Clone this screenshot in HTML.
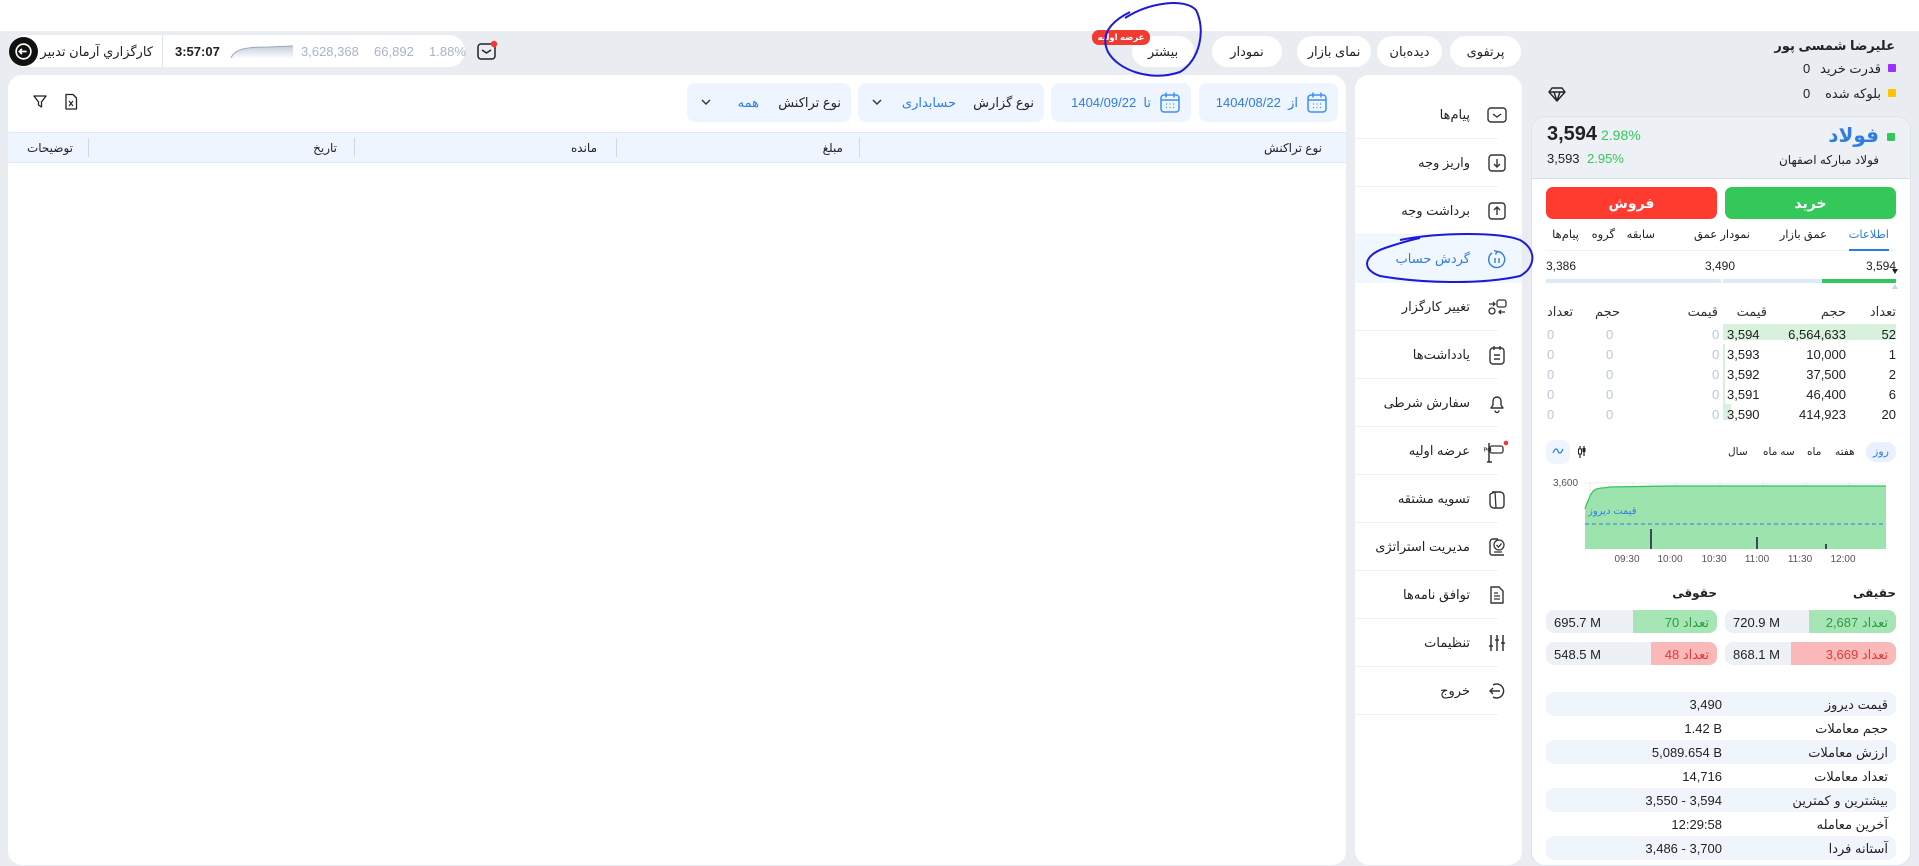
<!DOCTYPE html>
<html><head><meta charset="utf-8">
<style>
*{box-sizing:border-box;margin:0;padding:0}
body{width:1919px;height:852px;overflow:hidden;background:#e9ecf1;font-family:"Liberation Sans","DejaVu Sans",sans-serif;color:#222;position:relative;font-size:13px}
.a{position:absolute}
.r{direction:rtl;white-space:nowrap}
.pill{position:absolute;top:36px;height:31px;background:#fff;border-radius:16px;font-size:13px;display:flex;align-items:center;justify-content:center;direction:rtl}
.box{position:absolute;top:83px;height:39px;background:#eef5ff;border-radius:8px;direction:rtl;font-size:13px}
.mi{position:absolute;left:1355px;width:167px;height:48px;direction:rtl;font-size:13px}
.mi span{position:absolute;right:52px;top:16px}
.mi svg{position:absolute;right:14px;top:13px}
.mi .sep{position:absolute;left:0;right:24px;bottom:0;height:1px;background:#eef1f5}
.ob{position:absolute;font-size:13px;color:#333}
.g0{color:#b8c8db}
.st{position:absolute;left:1546px;width:350px;height:24px;font-size:13px}
.st.b{background:#f0f5fc;border-radius:8px}
.st .l{position:absolute;right:8px;top:5px;direction:rtl}
.st .v{position:absolute;right:174px;top:5px}
.tb{position:absolute;top:227px;font-size:11.5px;direction:rtl;white-space:nowrap}
</style></head><body>
<div class="a" style="left:0;top:0;width:1919px;height:31px;background:#fff"></div>

<!-- header left pill -->
<div class="a" style="left:9px;top:35px;width:456px;height:32px;background:#fff;border-radius:16px"></div>
<div class="a" style="left:9px;top:37px;width:29px;height:29px;border-radius:15px;background:#111"></div>
<svg class="a" style="left:13px;top:41px" width="21" height="21" viewBox="0 0 20 20"><circle cx="10" cy="10" r="7" fill="none" stroke="#fff" stroke-width="1.6"/><path d="M13 10H6M8.5 7.5 6 10l2.5 2.5" fill="none" stroke="#fff" stroke-width="1.6"/></svg>
<div class="a r" style="right:1766px;top:44px;font-size:13px">کارگزاري آرمان تدبير</div>
<div class="a" style="left:162px;top:35px;width:1px;height:32px;background:#dde6f0"></div>
<div class="a" style="left:175px;top:44px;font-size:13px;font-weight:bold">3:57:07</div>
<svg class="a" style="left:229px;top:43px" width="64" height="16"><defs><linearGradient id="sg" x1="0" x2="0" y1="0" y2="1"><stop offset="0" stop-color="#c6d0dc"/><stop offset="1" stop-color="#fff"/></linearGradient></defs><path d="M2 15C6 5 20 4 40 4L64 3V16H2Z" fill="url(#sg)"/><path d="M2 15C6 5 20 4 40 4L64 3" fill="none" stroke="#9aa8ba"/></svg>
<div class="a" style="left:301px;top:44px;font-size:13px;color:#a9b5c5;word-spacing:4px">3,628,368&nbsp; 66,892&nbsp; 1.88%</div>
<svg class="a" style="left:476px;top:40px" width="22" height="22" viewBox="0 0 22 22"><rect x="2" y="4" width="17" height="15" rx="3" fill="none" stroke="#222" stroke-width="1.5"/><path d="M6 10l4.5 3 4.5-3" fill="none" stroke="#222" stroke-width="1.5"/><circle cx="18" cy="4" r="3.2" fill="#f33"/></svg>

<!-- tabs -->
<div class="pill" style="left:1132px;width:62px">بیشتر</div>
<div class="a r" style="left:1092px;top:30px;width:58px;height:15px;background:#f23b30;color:#fff;border-radius:7px;font-size:8.5px;font-weight:bold;text-align:center;line-height:15px">عرضه اولیه</div>
<div class="pill" style="left:1212px;width:70px">نمودار</div>
<div class="pill" style="left:1297px;width:74px">نمای بازار</div>
<div class="pill" style="left:1377px;width:65px">دیده‌بان</div>
<div class="pill" style="left:1450px;width:71px">پرتفوی</div>

<!-- user -->
<div class="a r" style="right:24px;top:38px;font-size:13px;font-weight:bold">علیرضا شمسی پور</div>
<div class="a" style="left:1888px;top:64px;width:8px;height:8px;background:#9b30ff;border-radius:1px"></div>
<div class="a r" style="right:38px;top:61px">قدرت خرید</div>
<div class="a" style="left:1803px;top:61px">0</div>
<div class="a" style="left:1888px;top:89px;width:8px;height:8px;background:#ffc400;border-radius:1px"></div>
<div class="a r" style="right:38px;top:86px">بلوکه شده</div>
<div class="a" style="left:1803px;top:86px">0</div>
<svg class="a" style="left:1548px;top:86px" width="18" height="17" viewBox="0 0 18 17"><path d="M4 2h10l3 4-8 9-8-9z M1 6h16 M6 6l3 9 3-9" fill="none" stroke="#222" stroke-width="1.4" stroke-linejoin="round"/></svg>

<!-- main panel -->
<div class="a" style="left:8px;top:75px;width:1338px;height:790px;background:#fff;border-radius:14px"></div>
<div class="box" style="left:1199px;width:139px"><svg class="a" style="right:10px;top:8px" width="22" height="23" viewBox="0 0 22 23"><rect x="2" y="4" width="18" height="17" rx="3" fill="none" stroke="#3d8df5" stroke-width="1.5"/><path d="M2 9h18M7 1.5v5M15 1.5v5" stroke="#3d8df5" stroke-width="1.5"/><path d="M7 13h1M10.5 13h1M14 13h1M7 16.5h1M10.5 16.5h1M14 16.5h1" stroke="#3d8df5" stroke-width="1.3"/></svg><span class="a" style="right:40px;top:12px;color:#2f7de1">از&nbsp; 1404/08/22</span></div>
<div class="box" style="left:1051px;width:140px"><svg class="a" style="right:10px;top:8px" width="22" height="23" viewBox="0 0 22 23"><rect x="2" y="4" width="18" height="17" rx="3" fill="none" stroke="#3d8df5" stroke-width="1.5"/><path d="M2 9h18M7 1.5v5M15 1.5v5" stroke="#3d8df5" stroke-width="1.5"/><path d="M7 13h1M10.5 13h1M14 13h1M7 16.5h1M10.5 16.5h1M14 16.5h1" stroke="#3d8df5" stroke-width="1.3"/></svg><span class="a" style="right:40px;top:12px;color:#2f7de1">تا&nbsp; 1404/09/22</span></div>
<div class="box" style="left:858px;width:186px"><span class="a" style="right:10px;top:12px">نوع گزارش</span><span class="a" style="right:88px;top:12px;color:#2f7de1">حسابداری</span><svg class="a" style="left:14px;top:16px" width="10" height="7"><path d="M1 1l4 4 4-4" fill="none" stroke="#333" stroke-width="1.4"/></svg></div>
<div class="box" style="left:687px;width:164px"><span class="a" style="right:10px;top:12px">نوع تراکنش</span><span class="a" style="right:92px;top:12px;color:#2f7de1">همه</span><svg class="a" style="left:14px;top:16px" width="10" height="7"><path d="M1 1l4 4 4-4" fill="none" stroke="#333" stroke-width="1.4"/></svg></div>
<svg class="a" style="left:32px;top:94px" width="16" height="16" viewBox="0 0 16 16"><path d="M2 2h12l-4.5 6v5l-3-2V8z" fill="none" stroke="#222" stroke-width="1.3" stroke-linejoin="round"/></svg>
<svg class="a" style="left:64px;top:93px" width="14" height="18" viewBox="0 0 14 18"><path d="M2 1.5h7l3.5 3.5v11H2z" fill="none" stroke="#222" stroke-width="1.3" stroke-linejoin="round"/><path d="M5 8l4 5M9 8l-4 5" stroke="#222" stroke-width="1.2"/></svg>
<div class="a" style="left:8px;top:132px;width:1338px;height:31px;background:#eef5ff;border-top:1px solid #dfeaf8;border-bottom:1px solid #dfeaf8"></div>
<div class="a" style="left:88px;top:138px;width:1px;height:19px;background:#cfd9e6"></div>
<div class="a" style="left:354px;top:138px;width:1px;height:19px;background:#cfd9e6"></div>
<div class="a" style="left:616px;top:138px;width:1px;height:19px;background:#cfd9e6"></div>
<div class="a" style="left:859px;top:138px;width:1px;height:19px;background:#cfd9e6"></div>
<div class="a r" style="right:597px;top:141px;font-size:12px">نوع تراکنش</div>
<div class="a r" style="right:1076px;top:141px;font-size:12px">مبلغ</div>
<div class="a r" style="right:1322px;top:141px;font-size:12px">مانده</div>
<div class="a r" style="right:1582px;top:141px;font-size:12px">تاریخ</div>
<div class="a r" style="right:1846px;top:141px;font-size:12px">توضیحات</div>

<!-- sidebar -->
<div class="a" style="left:1355px;top:75px;width:167px;height:790px;background:#fff;border-radius:14px"></div>
<div class="mi" style="top:91px"><svg width="22" height="22" viewBox="0 0 22 22"><rect x="2" y="4" width="18" height="14" rx="3" fill="none" stroke="#333" stroke-width="1.4"/><path d="M7 10l4 3 4-3" fill="none" stroke="#333" stroke-width="1.4"/></svg><span>پیام‌ها</span><div class="sep"></div></div>
<div class="mi" style="top:139px"><svg width="22" height="22" viewBox="0 0 22 22"><rect x="3" y="3" width="16" height="16" rx="3" fill="none" stroke="#333" stroke-width="1.4"/><path d="M11 7v8M8 12l3 3 3-3" fill="none" stroke="#333" stroke-width="1.4"/></svg><span>واریز وجه</span><div class="sep"></div></div>
<div class="mi" style="top:187px"><svg width="22" height="22" viewBox="0 0 22 22"><rect x="3" y="3" width="16" height="16" rx="3" fill="none" stroke="#333" stroke-width="1.4"/><path d="M11 15V7M8 10l3-3 3 3" fill="none" stroke="#333" stroke-width="1.4"/></svg><span>برداشت وجه</span><div class="sep"></div></div>
<div class="mi" style="top:235px;background:#f1f7ff"><svg width="22" height="22" viewBox="0 0 22 22"><path d="M6 5a8 8 0 1 0 5-1.5" fill="none" stroke="#2f7de1" stroke-width="1.4"/><path d="M8 2.5l3 1-1.5 3" fill="none" stroke="#2f7de1" stroke-width="1.4"/><path d="M9 10v5M13 10v5" stroke="#2f7de1" stroke-width="1.4"/></svg><span style="color:#2f7de1">گردش حساب</span></div>
<div class="mi" style="top:283px"><svg width="22" height="22" viewBox="0 0 22 22"><rect x="11" y="4" width="9" height="7" rx="2" fill="none" stroke="#333" stroke-width="1.3"/><circle cx="6" cy="15" r="3" fill="none" stroke="#333" stroke-width="1.3"/><path d="M3 8h6M7 6l2 2-2 2M19 16h-6M15 14l-2 2 2 2" fill="none" stroke="#333" stroke-width="1.3"/></svg><span>تغییر کارگزار</span><div class="sep"></div></div>
<div class="mi" style="top:331px"><svg width="22" height="22" viewBox="0 0 22 22"><rect x="4" y="4" width="14" height="16" rx="3" fill="none" stroke="#333" stroke-width="1.4"/><path d="M8 2v4M14 2v4M8 11h6M8 15h6" stroke="#333" stroke-width="1.4"/></svg><span>یادداشت‌ها</span><div class="sep"></div></div>
<div class="mi" style="top:379px"><svg width="22" height="22" viewBox="0 0 22 22"><path d="M5 16h12l-2-3V9a4 4 0 0 0-8 0v4z M9 18.5a2 2 0 0 0 4 0" fill="none" stroke="#333" stroke-width="1.4" stroke-linejoin="round"/></svg><span>سفارش شرطی</span><div class="sep"></div></div>
<div class="mi" style="top:427px"><svg width="24" height="24" viewBox="0 0 24 24"><path d="M5 3v19M3 22h5" stroke="#333" stroke-width="1.5"/><rect x="6" y="6" width="13" height="7" rx="2" fill="none" stroke="#333" stroke-width="1.3"/><text x="7.5" y="11.5" font-size="5.5" font-family="Liberation Sans" font-weight="bold" fill="#333">IPO</text><circle cx="22" cy="3" r="2.3" fill="#f33"/></svg><span>عرضه اولیه</span><div class="sep"></div></div>
<div class="mi" style="top:475px"><svg width="22" height="22" viewBox="0 0 22 22"><path d="M6 4h8a4 4 0 0 1 4 4v9a3 3 0 0 1-3 3H8a4 4 0 0 1-4-4V6" fill="none" stroke="#333" stroke-width="1.4"/><path d="M4 6l5 -2 1 16" fill="none" stroke="#333" stroke-width="1.3"/></svg><span>تسویه مشتقه</span><div class="sep"></div></div>
<div class="mi" style="top:523px"><svg width="22" height="22" viewBox="0 0 22 22"><path d="M4 14V6a3 3 0 0 1 3-3h5M4 14v3a2 2 0 0 0 2 2h12" fill="none" stroke="#333" stroke-width="1.4"/><circle cx="13" cy="9" r="5" fill="none" stroke="#333" stroke-width="1.3"/><path d="M10.5 9l2 2 3-3.5M8 16h8" fill="none" stroke="#333" stroke-width="1.3"/></svg><span>مدیریت استراتژی</span><div class="sep"></div></div>
<div class="mi" style="top:571px"><svg width="22" height="22" viewBox="0 0 22 22"><path d="M5 3h8l4 4v12H5z" fill="none" stroke="#333" stroke-width="1.4" stroke-linejoin="round"/><path d="M8 9h4M8 12h6M8 15h6" stroke="#333" stroke-width="1.3"/></svg><span>توافق نامه‌ها</span><div class="sep"></div></div>
<div class="mi" style="top:619px"><svg width="22" height="22" viewBox="0 0 22 22"><path d="M5 3v16M11 3v16M17 3v16M3 14h4M9 8h4M15 11h4" stroke="#333" stroke-width="1.5"/></svg><span>تنظیمات</span><div class="sep"></div></div>
<div class="mi" style="top:667px"><svg width="22" height="22" viewBox="0 0 22 22"><path d="M7 5a7 7 0 1 1 0 12" fill="none" stroke="#333" stroke-width="1.4"/><path d="M14 11H4M7 8l-3 3 3 3" fill="none" stroke="#333" stroke-width="1.4"/></svg><span>خروج</span><div class="sep"></div></div>

<!-- right card -->
<div class="a" style="left:1531px;top:116px;width:380px;height:750px;background:#fff;border-radius:14px;border:1px solid #dbe4ef;overflow:hidden"><div style="height:62px;background:#edf1f6;border-bottom:1px solid #d3dfec"></div></div>
<div class="a" style="left:1547px;top:123px;font-size:20px;font-weight:bold">3,594</div>
<div class="a" style="left:1601px;top:127px;font-size:14px;color:#34c759">2.98%</div>
<div class="a" style="left:1547px;top:151px;font-size:13px">3,593</div>
<div class="a" style="left:1587px;top:151px;font-size:13px;color:#34c759">2.95%</div>
<div class="a" style="left:1887px;top:133px;width:8px;height:8px;background:#34c759;border-radius:1px"></div>
<div class="a r" style="right:40px;top:123px;font-size:20px;font-weight:bold;color:#2f7de1">فولاد</div>
<div class="a r" style="right:40px;top:153px;font-size:12px">فولاد مبارکه اصفهان</div>
<div class="a" style="left:1546px;top:187px;width:171px;height:32px;background:#ff3b30;border-radius:7px;color:#fff;font-weight:bold;font-size:14px;text-align:center;line-height:32px">فروش</div>
<div class="a" style="left:1725px;top:187px;width:171px;height:32px;background:#34c759;border-radius:7px;color:#fff;font-weight:bold;font-size:14px;text-align:center;line-height:32px">خرید</div>
<div class="tb" style="right:30px;color:#2f7de1">اطلاعات</div>
<div class="tb" style="right:92px">عمق بازار</div>
<div class="tb" style="right:169px">نمودار عمق</div>
<div class="tb" style="right:264px">سابقه</div>
<div class="tb" style="right:304px">گروه</div>
<div class="tb" style="right:340px">پیام‌ها</div>
<div class="a" style="left:1546px;top:250px;width:350px;height:1px;background:#eef2f7"></div>
<div class="a" style="left:1849px;top:249px;width:40px;height:2px;background:#2f7de1"></div>
<div class="a" style="left:1546px;top:259px;font-size:12px">3,386</div>
<div class="a" style="left:1705px;top:259px;font-size:12px">3,490</div>
<div class="a" style="left:1866px;top:259px;font-size:12px">3,594</div>
<div class="a" style="left:1546px;top:279px;width:175px;height:4px;background:#dce9f6"></div>
<div class="a" style="left:1723px;top:279px;width:173px;height:4px;background:#dce9f6"></div>
<div class="a" style="left:1822px;top:279px;width:74px;height:4px;background:#34c759"></div>
<svg class="a" style="left:1891px;top:268px" width="8" height="22"><path d="M1 1h6l-3 5z" fill="#222"/><path d="M1 21h6l-3-5z" fill="#c7d6e6"/></svg>
<!-- order book -->
<div class="ob r" style="right:23px;top:304px">تعداد</div>
<div class="ob r" style="right:73px;top:304px">حجم</div>
<div class="ob r" style="right:152px;top:304px">قیمت</div>
<div class="ob r" style="right:201px;top:304px">قیمت</div>
<div class="ob r" style="left:1595px;top:304px">حجم</div>
<div class="ob r" style="left:1547px;top:304px">تعداد</div>
<div class="a" style="left:1723px;top:324px;width:173px;height:16px;background:#d8f1dd"></div>
<div class="a" style="left:1723px;top:344px;width:2px;height:76px;background:#d8f1dd"></div>
<div class="a" style="left:1723px;top:404px;width:8px;height:16px;background:#d8f1dd"></div>
<div class="a" style="left:1546px;top:325px;width:350px;font-size:13px;line-height:20px">
<div style="position:relative;height:20px"><span class="a" style="right:0">52</span><span class="a" style="right:50px">6,564,633</span><span class="a" style="left:181px">3,594</span><span class="a g0" style="left:166px">0</span><span class="a g0" style="left:60px">0</span><span class="a g0" style="left:1px">0</span></div>
<div style="position:relative;height:20px"><span class="a" style="right:0">1</span><span class="a" style="right:50px">10,000</span><span class="a" style="left:181px">3,593</span><span class="a g0" style="left:166px">0</span><span class="a g0" style="left:60px">0</span><span class="a g0" style="left:1px">0</span></div>
<div style="position:relative;height:20px"><span class="a" style="right:0">2</span><span class="a" style="right:50px">37,500</span><span class="a" style="left:181px">3,592</span><span class="a g0" style="left:166px">0</span><span class="a g0" style="left:60px">0</span><span class="a g0" style="left:1px">0</span></div>
<div style="position:relative;height:20px"><span class="a" style="right:0">6</span><span class="a" style="right:50px">46,400</span><span class="a" style="left:181px">3,591</span><span class="a g0" style="left:166px">0</span><span class="a g0" style="left:60px">0</span><span class="a g0" style="left:1px">0</span></div>
<div style="position:relative;height:20px"><span class="a" style="right:0">20</span><span class="a" style="right:50px">414,923</span><span class="a" style="left:181px">3,590</span><span class="a g0" style="left:166px">0</span><span class="a g0" style="left:60px">0</span><span class="a g0" style="left:1px">0</span></div>
</div>
<!-- chart toggles -->
<div class="a r" style="left:1866px;top:442px;width:30px;height:20px;background:#e8f1fd;border-radius:10px;color:#2f7de1;font-size:11px;text-align:center;line-height:20px">روز</div>
<div class="a r" style="left:1835px;top:446px;font-size:10.5px">هفته</div>
<div class="a r" style="left:1807px;top:446px;font-size:10.5px">ماه</div>
<div class="a r" style="left:1763px;top:446px;font-size:10.5px">سه ماه</div>
<div class="a r" style="left:1728px;top:446px;font-size:10.5px">سال</div>
<div class="a" style="left:1546px;top:440px;width:24px;height:24px;background:#eef5ff;border-radius:8px"></div>
<svg class="a" style="left:1552px;top:447px" width="12" height="8"><path d="M1 6C3 1 5 1 6 4s3 3 5-2" fill="none" stroke="#2f7de1" stroke-width="1.2"/></svg>
<svg class="a" style="left:1577px;top:445px" width="10" height="14"><path d="M3 1v12M7 1v10" stroke="#222" stroke-width="1.2"/><rect x="1.5" y="4" width="3" height="5" fill="#fff" stroke="#222"/><rect x="5.5" y="3" width="3" height="4" fill="#222"/></svg>
<svg class="a" style="left:1550px;top:474px" width="345" height="95">
<g stroke="#e9eef4"><path d="M40 8V75M83 8V75M126 8V75M170 8V75M213 8V75M256 8V75M299 8V75"/><path d="M35 9H336"/></g>
<path d="M35 75V35C37 28 38 28 40 22C45 12 50 15 60 13L120 12L180 12 L240 12L336 12V75Z" fill="#9de3ae"/>
<path d="M35 35C37 28 38 28 40 22C45 12 50 15 60 13L120 12L180 12 L240 12L336 12" fill="none" stroke="#34c759" stroke-width="1.3"/>
<path d="M35 50H336" stroke="#2f7de1" stroke-dasharray="4 3"/>
<path d="M101 55V75M207 63V75M276 70V75" stroke="#3a4a55" stroke-width="2"/>
<text x="3" y="12" font-size="10" fill="#555" font-family="Liberation Sans">3,600</text>
<g font-size="10" fill="#555" font-family="Liberation Sans" text-anchor="middle"><text x="77" y="88">09:30</text><text x="120" y="88">10:00</text><text x="164" y="88">10:30</text><text x="207" y="88">11:00</text><text x="250" y="88">11:30</text><text x="293" y="88">12:00</text></g>
</svg>
<div class="a r" style="left:1588px;top:506px;font-size:10px;color:#2f7de1">قیمت دیروز</div>
<!-- haghighi -->
<div class="a r" style="right:23px;top:586px;font-size:12px;font-weight:bold">حقیقی</div>
<div class="a r" style="right:202px;top:586px;font-size:12px;font-weight:bold">حقوقی</div>
<div class="a" style="left:1546px;top:610px;width:171px;height:23px;background:#edf1f6;border-radius:8px;overflow:hidden"><div class="a" style="right:0;top:0;width:84px;height:23px;background:#a6e6b5"></div><span class="a" style="left:8px;top:5px">695.7 M</span><span class="a r" style="right:8px;top:5px;color:#2b9c48">تعداد 70</span></div>
<div class="a" style="left:1725px;top:610px;width:171px;height:23px;background:#edf1f6;border-radius:8px;overflow:hidden"><div class="a" style="right:0;top:0;width:87px;height:23px;background:#a6e6b5"></div><span class="a" style="left:8px;top:5px">720.9 M</span><span class="a r" style="right:8px;top:5px;color:#2b9c48">تعداد 2,687</span></div>
<div class="a" style="left:1546px;top:642px;width:171px;height:23px;background:#edf1f6;border-radius:8px;overflow:hidden"><div class="a" style="right:0;top:0;width:66px;height:23px;background:#fbb8b8"></div><span class="a" style="left:8px;top:5px">548.5 M</span><span class="a r" style="right:8px;top:5px;color:#e03a3a">تعداد 48</span></div>
<div class="a" style="left:1725px;top:642px;width:171px;height:23px;background:#edf1f6;border-radius:8px;overflow:hidden"><div class="a" style="right:0;top:0;width:105px;height:23px;background:#fbb8b8"></div><span class="a" style="left:8px;top:5px">868.1 M</span><span class="a r" style="right:8px;top:5px;color:#e03a3a">تعداد 3,669</span></div>
<!-- stats -->
<div class="st b" style="top:692px"><span class="l">قیمت دیروز</span><span class="v">3,490</span></div>
<div class="st" style="top:716px"><span class="l">حجم معاملات</span><span class="v">1.42 B</span></div>
<div class="st b" style="top:740px"><span class="l">ارزش معاملات</span><span class="v">5,089.654 B</span></div>
<div class="st" style="top:764px"><span class="l">تعداد معاملات</span><span class="v">14,716</span></div>
<div class="st b" style="top:788px"><span class="l">بیشترین و کمترین</span><span class="v">3,550 - 3,594</span></div>
<div class="st" style="top:812px"><span class="l">آخرین معامله</span><span class="v">12:29:58</span></div>
<div class="st b" style="top:836px"><span class="l">آستانه فردا</span><span class="v">3,486 - 3,700</span></div>

<!-- handwritten annotations -->
<svg class="a" style="left:0;top:0" width="1919" height="852" fill="none" stroke="#1a1ad8" stroke-width="2">
<path d="M1125 18C1150 2 1185 -2 1196 10C1206 30 1200 60 1180 72C1150 82 1118 70 1108 52C1100 35 1110 22 1130 12"/>
<path d="M1400 240C1440 232 1500 232 1520 240C1538 250 1535 268 1520 276C1480 285 1420 283 1380 276C1362 270 1362 256 1385 248C1400 243 1410 240 1420 238"/>
</svg>
</body></html>
